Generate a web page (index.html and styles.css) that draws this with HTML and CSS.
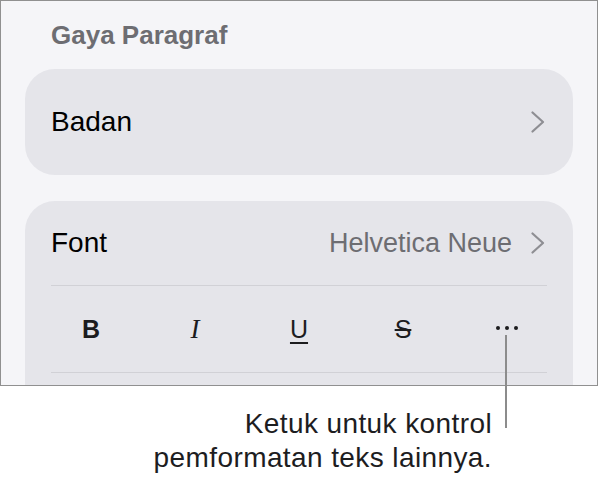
FILE: index.html
```html
<!DOCTYPE html>
<html lang="id">
<head>
    <meta charset="UTF-8">
    <meta name="viewport" content="width=device-width, initial-scale=1.0">
    <title>Gaya Paragraf</title>
    <link rel="stylesheet" href="styles.css">
</head>
<body>
    <div class="figure">
        <div class="screen">
            <div class="section-title">Gaya Paragraf</div>

            <div class="card">
                <div class="row row-single">
                    <span class="row-label">Badan</span>
                    <svg class="chevron" viewBox="0 0 14 22" width="14" height="22">
                        <polyline points="1.5,1.5 12,11 1.5,20.5" />
                    </svg>
                </div>
            </div>

            <div class="card card-font">
                <div class="row row-font">
                    <span class="row-label">Font</span>
                    <span class="row-value">Helvetica Neue</span>
                    <svg class="chevron" viewBox="0 0 14 22" width="14" height="22">
                        <polyline points="1.5,1.5 12,11 1.5,20.5" />
                    </svg>
                </div>
                <div class="divider"></div>
                <div class="format-row">
                    <button class="fmt-btn fmt-bold">B</button>
                    <button class="fmt-btn fmt-italic">I</button>
                    <button class="fmt-btn fmt-underline">U</button>
                    <button class="fmt-btn fmt-strike">S</button>
                    <button class="fmt-btn fmt-more">
                        <span class="dot"></span><span class="dot"></span><span class="dot"></span>
                    </button>
                </div>
                <div class="divider"></div>
            </div>
        </div>

        <div class="callout-line"></div>
        <div class="callout">Ketuk untuk kontrol<br>pemformatan teks lainnya.</div>
    </div>
</body>
</html>
```

FILE: styles.css
```css
* { margin: 0; padding: 0; box-sizing: border-box; }

body {
    background: #ffffff;
    font-family: "Liberation Sans", Arial, sans-serif;
    color: #1c1c1e;
}

.figure {
    position: relative;
    width: 599px;
    height: 481px;
}

.screen {
    width: 598px;
    height: 386px;
    border: 1px solid #909090;
    background: #f5f5f8;
    overflow: hidden;
    padding: 19px 24px 0 24px;
}

.section-title {
    font-size: 26px;
    line-height: 30px;
    font-weight: 700;
    color: #6d6d72;
    padding-left: 26px;
    margin-bottom: 19px;
}

.card {
    background: #e5e5ea;
    border-radius: 30px;
}

.row {
    display: flex;
    align-items: center;
    padding: 0 28px 0 26px;
    font-size: 28px;
}

.row-single {
    height: 106px;
}

.row-label {
    flex: 1;
    color: #000000;
}

.row-value {
    color: #6d6d72;
    font-size: 27px;
    margin-right: 19px;
}

.chevron {
    display: block;
    fill: none;
    stroke: #8e8e93;
    stroke-width: 2.2;
    stroke-linecap: round;
    stroke-linejoin: round;
}

.card-font {
    margin-top: 26px;
    height: 220px;
}

.row-font {
    height: 84px;
}

.divider {
    height: 1px;
    background: #d1d1d6;
    margin: 0 26px;
}

.format-row {
    display: grid;
    grid-template-columns: repeat(5, 1fr);
    height: 86px;
    padding: 0 14px;
}

.fmt-btn {
    background: none;
    border: none;
    display: flex;
    align-items: center;
    justify-content: center;
    color: #1c1c1e;
    font-family: "Liberation Sans", Arial, sans-serif;
    font-size: 25px;
}

.fmt-bold {
    font-weight: 700;
}

.fmt-italic {
    font-family: "Liberation Serif", "Times New Roman", serif;
    font-style: italic;
    font-size: 27px;
}

.fmt-underline {
    text-decoration: underline;
    text-decoration-thickness: 1.5px;
    text-underline-offset: 4px;
}

.fmt-strike {
    text-decoration: line-through;
    text-decoration-thickness: 1.5px;
}

.fmt-more {
    gap: 4.5px;
    padding-bottom: 2px;
}

.dot {
    width: 4.5px;
    height: 4.5px;
    border-radius: 50%;
    background: #1c1c1e;
}

/* garis penunjuk */
.callout-line {
    position: absolute;
    left: 505px;
    top: 335px;
    width: 2px;
    height: 93px;
    background: #8c8c8c;
}

.callout {
    width: 492px;
    margin-top: 21px;
    text-align: right;
    font-size: 28px;
    line-height: 34px;
    color: #1d1d1f;
    letter-spacing: 0.4px;
}
```
